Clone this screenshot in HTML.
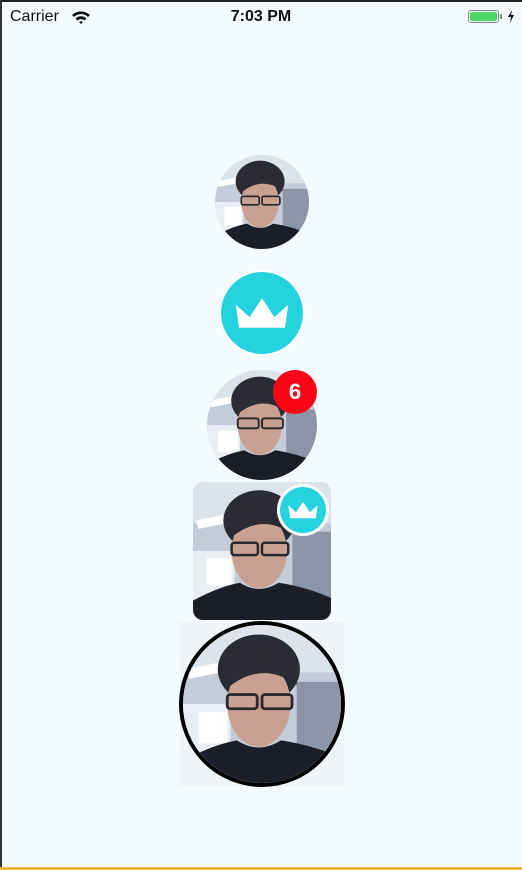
<!DOCTYPE html>
<html><head><meta charset="utf-8"><style>
html,body{margin:0;padding:0}
body{width:522px;height:870px;background:#f4fbff;position:relative;overflow:hidden;font-family:"Liberation Sans",sans-serif}
.topb{position:absolute;left:0;top:0;width:522px;height:2px;background:#222}
.leftb{position:absolute;left:0;top:0;width:2px;height:870px;background:#333}
.bot{position:absolute;left:0;top:867px;width:522px;height:3px;background:#f0b840}
.a{position:absolute;overflow:hidden}
.a svg{width:100%;height:100%;display:block}
</style></head><body>
<div class="topb"></div><div class="leftb"></div>
<div style="position:absolute;left:10px;top:8px;font-size:16px;color:#111">Carrier</div>
<svg style="position:absolute;left:71px;top:10px" width="20" height="14" viewBox="0 0 20 14"><path d="M1 5 A13 13 0 0 1 19 5 L17 7 A10 10 0 0 0 3 7Z M4.5 8.5 A8 8 0 0 1 15.5 8.5 L13.5 10.5 A5 5 0 0 0 6.5 10.5Z M8 12 A3 3 0 0 1 12 12 L10 14Z" fill="#111"/></svg>
<div style="position:absolute;left:0;width:522px;top:8px;text-align:center;font-size:16px;font-weight:bold;color:#111">7:03 PM</div>
<div style="position:absolute;left:468px;top:10px;width:31px;height:13px;border:1px solid #888;border-radius:3px;box-sizing:border-box;padding:1px"><div style="width:100%;height:100%;background:#4cd964;border-radius:2px"></div></div>
<div style="position:absolute;left:500px;top:14px;width:2px;height:5px;background:#888"></div>
<svg style="position:absolute;left:507px;top:10px" width="8" height="13" viewBox="0 0 8 13"><path d="M5 0 L1 7 H4 L3 13 L7 5 H4Z" fill="#111"/></svg>

<svg width="0" height="0" style="position:absolute">
<defs>
<symbol id="face" viewBox="0 0 100 100" preserveAspectRatio="none">
<rect width="100" height="100" fill="#c3ccd8"/>
<rect x="0" y="0" width="100" height="30" fill="#dde3ea"/>
<polygon points="2,28 22,24 24,30 4,34" fill="#fff"/>
<rect x="72" y="36" width="28" height="52" fill="#8d96a6"/>
<rect x="0" y="50" width="30" height="40" fill="#e8eef4"/>
<rect x="10" y="55" width="18" height="20" fill="#fff"/>
<ellipse cx="48" cy="28" rx="26" ry="22" fill="#2b2c33"/>
<ellipse cx="48" cy="50" rx="20" ry="27" fill="#c9a192"/>
<path d="M26 32 Q48 8 72 30 L72 38 Q50 22 28 40Z" fill="#2b2c33"/>
<rect x="28" y="44" width="19" height="9" rx="2" fill="none" stroke="#2a2a2e" stroke-width="1.8"/>
<rect x="50" y="44" width="19" height="9" rx="2" fill="none" stroke="#2a2a2e" stroke-width="1.8"/>
<path d="M0 100 L0 86 Q18 76 34 73 Q48 82 62 73 Q82 76 100 84 L100 100Z" fill="#1b1e29"/>
</symbol>
<symbol id="crown" viewBox="0 0 100 100">
<circle cx="50" cy="50" r="50" fill="#25d3df"/>
<path d="M18 40 L35 55 L50 32 L65 55 L82 40 L78 68 L22 68Z" fill="#fff"/>
</symbol>
</defs></svg>

<div class="a" style="left:215px;top:155px;width:94px;height:94px;border-radius:50%"><svg><use href="#face"/></svg></div>

<div class="a" style="left:219px;top:270px;width:86px;height:86px;border-radius:50%;background:#fff"><svg style="margin:2px;width:82px;height:82px"><use href="#crown"/></svg></div>

<div class="a" style="left:207px;top:370px;width:110px;height:110px;border-radius:50%"><svg><use href="#face"/></svg></div>
<div style="position:absolute;left:273px;top:370px;width:44px;height:44px;border-radius:50%;background:#fa0617;color:#fff;font-size:22px;font-weight:bold;text-align:center;line-height:44px">6</div>

<div class="a" style="left:193px;top:482px;width:138px;height:138px;border-radius:10px"><svg><use href="#face"/></svg></div>
<div class="a" style="left:277px;top:484px;width:52px;height:52px;border-radius:50%;background:#fff"><svg style="margin:3px;width:46px;height:46px"><use href="#crown"/></svg></div>

<div style="position:absolute;left:180px;top:622px;width:164px;height:164px;background:#eef4f8"></div>
<div class="a" style="left:179px;top:621px;width:166px;height:166px;border-radius:50%;border:4px solid #000;box-sizing:border-box"><svg><use href="#face"/></svg></div>

<div class="bot"></div>
</body></html>
